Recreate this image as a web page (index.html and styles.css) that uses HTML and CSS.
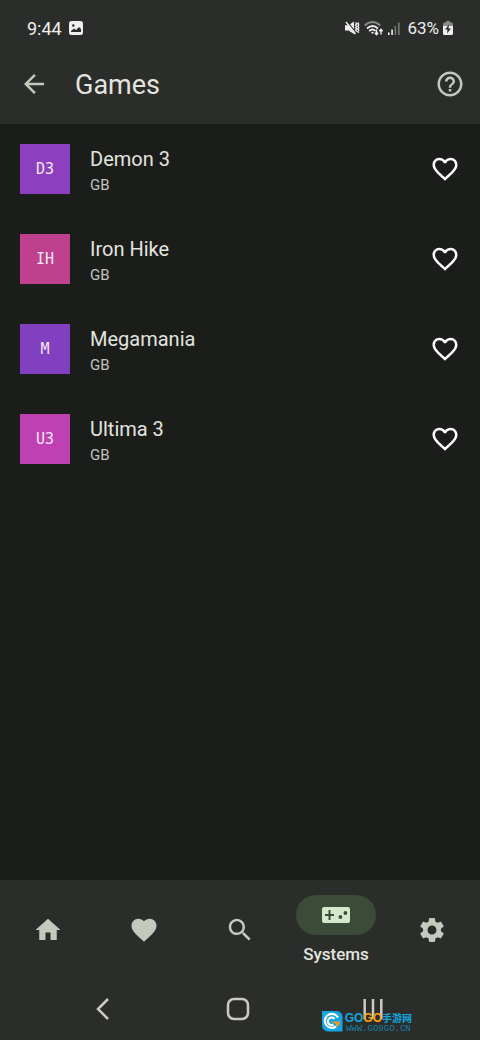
FILE: index.html
```html
<!DOCTYPE html>
<html lang="en">
<head>
<meta charset="utf-8">
<meta name="viewport" content="width=device-width, initial-scale=1">
<title>Games</title>
<link rel="stylesheet" href="styles.css">
</head>
<body>
<svg class="defs" aria-hidden="true">
  <symbol id="heart-outline" viewBox="0 0 24 24"><path d="M16.5 3c-1.74 0-3.41.81-4.5 2.09C10.91 3.81 9.24 3 7.5 3 4.42 3 2 5.42 2 8.5c0 3.78 3.4 6.86 8.55 11.54L12 21.35l1.45-1.32C18.6 15.36 22 12.28 22 8.5 22 5.42 19.58 3 16.5 3zm-4.4 15.55l-.1.1-.1-.1C7.14 14.24 4 11.39 4 8.5 4 6.5 5.5 5 7.5 5c1.54 0 3.04.99 3.57 2.36h1.87C13.46 5.99 14.96 5 16.5 5c2 0 3.5 1.5 3.5 3.5 0 2.89-3.14 5.74-7.9 10.05z"/></symbol>
</svg>
<div class="screen">
  <header class="top">
    <div class="status">
      <span class="status-side">
        <span>9:44</span>
        <svg class="picture" viewBox="0 0 14 14"><path fill-rule="evenodd" d="M2.5 0h9A2.5 2.5 0 0 1 14 2.5v9a2.5 2.5 0 0 1-2.500 2.500h-9A2.500 2.500 0 0 1 0 11.500v-9A2.500 2.500 0 0 1 2.500 0zM2 11h10V8L10 6 7 9 5 7.500 2 10zM3 4.500a1.300 1.300 0 1 0 2.600 0a1.300 1.300 0 1 0-2.600 0z"/></svg>
      </span>
      <span class="status-side signals">
        <svg width="15" height="14" viewBox="0 0 15 14"><path d="M0 4.300h3.500L9 .5v12.500l-5.500-3.500H0z"/><path d="M2 .5l9.500 12" stroke="#2b2d2b" stroke-width="1.300"/><path d="M1 1l9.500 12" stroke="#eee" stroke-width="1.500"/><path d="M10.500 1.500l1.300 1.300-1.300 1.300 1.300 1.300-1.300 1.300 1.300 1.300-1.300 1.300 1.300 1.300M13.800 1.500l-1 1.300 1 1.300-1 1.300 1 1.300-1 1.300 1 1.300-1 1.300 1 1.300" fill="none" stroke="#eee" stroke-width="1.300"/></svg>
        <svg width="20" height="15" viewBox="0 0 20 15"><g fill="none" stroke="#eee" stroke-width="1.700"><path d="M.7 4.500Q8.500-2.500 16.300 4.500" stroke="#888a88"/><path d="M3 7.500Q8.500 2.500 14 7.500M5.200 10Q8.500 7 11.500 10"/></g><path d="M7 11.300q1.500-1.200 3 0L8.500 13z"/><path d="M12.500 8.500v5M10.800 11.800l1.700 1.900 1.700-1.900M17 13.500v-5M15.300 10.200L17 8.300l1.700 1.900" fill="none" stroke="#eee" stroke-width="1.400"/></svg>
        <svg width="12" height="13" viewBox="0 0 12 13"><path d="M0 10.500h1.600V13H0zM3.300 7.500h1.600V13H3.300z"/><path fill="#777977" d="M6.600 4h1.600v9H6.600zM10 .5h1.600V13H10z"/></svg>
        <span class="percent">63%</span>
        <svg class="battery" viewBox="0 0 10 14"><path fill="#888a88" d="M3 0h4v1.500h1.500A1.500 1.500 0 0 1 10 3v3H0V3a1.500 1.500 0 0 1 1.500-1.500H3z"/><path d="M0 5h10v7.500A1.500 1.500 0 0 1 8.500 14h-7A1.500 1.500 0 0 1 0 12.500z"/><path fill="#2b2d2b" d="M6 3.500L2 8.500h2.500L4 12.500 8 7.500H5.500z"/></svg>
      </span>
    </div>
    <div class="appbar">
      <button class="icon-button" aria-label="Back"><svg class="icon-xl" viewBox="0 0 24 24"><path d="M20 11H7.830l5.590-5.590L12 4l-8 8 8 8 1.410-1.410L7.830 13H20z"/></svg></button>
      <h1>Games</h1>
      <button class="icon-button" aria-label="Help"><svg class="icon-xl" viewBox="0 0 24 24"><path d="M11 18h2v-2h-2v2zm1-16C6.480 2 2 6.480 2 12s4.480 10 10 10 10-4.480 10-10S17.520 2 12 2zm0 18c-4.410 0-8-3.590-8-8s3.590-8 8-8 8 3.590 8 8-3.590 8-8 8zm0-14c-2.210 0-4 1.790-4 4h2c0-1.100.9-2 2-2s2 .9 2 2c0 2-3 1.750-3 5h2c0-2.250 3-2.500 3-5 0-2.210-1.790-4-4-4z"/></svg></button>
    </div>
  </header>
  <main>
    <ul class="games">
      <li><span class="cover violet">D3</span><div class="info"><h2>Demon 3</h2><p>GB</p></div><button class="favorite" aria-label="Favorite Demon 3"><svg class="icon-xl"><use href="#heart-outline"/></svg></button></li>
      <li><span class="cover pink">IH</span><div class="info"><h2>Iron Hike</h2><p>GB</p></div><button class="favorite" aria-label="Favorite Iron Hike"><svg class="icon-xl"><use href="#heart-outline"/></svg></button></li>
      <li><span class="cover indigo">M</span><div class="info"><h2>Megamania</h2><p>GB</p></div><button class="favorite" aria-label="Favorite Megamania"><svg class="icon-xl"><use href="#heart-outline"/></svg></button></li>
      <li><span class="cover magenta">U3</span><div class="info"><h2>Ultima 3</h2><p>GB</p></div><button class="favorite" aria-label="Favorite Ultima 3"><svg class="icon-xl"><use href="#heart-outline"/></svg></button></li>
    </ul>
  </main>
  <footer class="bottom">
    <nav class="tabs" aria-label="Main">
      <button aria-label="Home"><svg class="icon-xl" viewBox="0 0 24 24"><path d="M10 20v-6h4v6h5v-8h3L12 3 2 12h3v8z"/></svg></button>
      <button aria-label="Favorites"><svg class="icon-xl" viewBox="0 0 24 24"><path d="M12 21.350l-1.450-1.320C5.400 15.360 2 12.280 2 8.500 2 5.420 4.420 3 7.500 3c1.740 0 3.410.81 4.500 2.090C13.090 3.810 14.760 3 16.500 3 19.580 3 22 5.420 22 8.500c0 3.780-3.400 6.860-8.550 11.540L12 21.350z"/></svg></button>
      <button aria-label="Search"><svg class="icon-xl" viewBox="0 0 24 24"><path d="M15.500 14h-.79l-.28-.27C15.410 12.590 16 11.110 16 9.500 16 5.910 13.090 3 9.500 3S3 5.910 3 9.500 5.910 16 9.500 16c1.610 0 3.090-.59 4.230-1.570l.27.28v.79l5 4.990L20.490 19l-4.990-5zm-6 0C7.010 14 5 11.990 5 9.500S7.010 5 9.500 5 14 7.010 14 9.500 11.990 14 9.500 14z"/></svg></button>
      <button class="active"><span class="pill"><svg width="28" height="16" viewBox="0 0 28 16"><path fill-rule="evenodd" d="M2 0h24a2 2 0 0 1 2 2v12a2 2 0 0 1-2 2H2a2 2 0 0 1-2-2V2a2 2 0 0 1 2-2zM6.500 3v4H3v2h3.500v4h2V9H12V7H8.500V3zM16.500 10a1.900 1.900 0 1 0 3.800 0a1.900 1.900 0 1 0-3.800 0zM21.500 6a1.900 1.900 0 1 0 3.800 0a1.900 1.900 0 1 0-3.800 0z"/></svg></span><span>Systems</span></button>
      <button aria-label="Settings"><svg class="icon-xl" viewBox="0 0 24 24"><path d="M19.140 12.940c.04-.3.060-.61.060-.94 0-.32-.02-.64-.07-.94l2.030-1.580c.18-.14.230-.41.120-.61l-1.920-3.320c-.12-.22-.37-.29-.59-.22l-2.390.96c-.5-.38-1.030-.7-1.620-.94l-.36-2.540c-.04-.24-.24-.41-.48-.41h-3.840c-.24 0-.43.17-.47.41l-.36 2.540c-.59.24-1.130.57-1.620.94l-2.390-.96c-.22-.08-.47 0-.59.22L2.740 8.870c-.12.21-.08.47.12.61l2.030 1.580c-.05.3-.09.63-.09.94s.02.64.07.94l-2.030 1.580c-.18.14-.23.41-.12.61l1.920 3.320c.12.22.37.29.59.22l2.390-.96c.5.38 1.030.7 1.620.94l.36 2.540c.05.24.24.41.48.41h3.840c.24 0 .44-.17.47-.41l.36-2.540c.59-.24 1.130-.56 1.620-.94l2.390.96c.22.08.47 0 .59-.22l1.920-3.320c.12-.22.070-.47-.12-.61l-2.010-1.580zM12 15.600c-1.980 0-3.600-1.620-3.600-3.600s1.620-3.600 3.600-3.600 3.600 1.620 3.600 3.600-1.620 3.600-3.600 3.600z"/></svg></button>
    </nav>
    <div class="system">
      <button aria-label="System back"><svg viewBox="0 0 24 24"><path d="M17 2L7 12l10 10"/></svg></button>
      <button aria-label="System home"><svg viewBox="0 0 24 24"><rect x="2" y="2" width="20" height="20" rx="6"/></svg></button>
      <button aria-label="Recent apps"><svg viewBox="0 0 24 24"><path d="M3.700 2v20M12 2v20M20.300 2v20"/></svg></button>
    </div>
    <div class="watermark">
      <svg width="22" height="21" viewBox="0 0 22 21"><path fill="#13a5df" d="M1 0h14a6 6 0 0 1 6.500 6v14.500H7a6 6 0 0 1-6-6z"/><path fill="none" stroke="#fff" stroke-width="2.200" d="M17 6.500a7 7 0 1 0-2 9M13.500 8a3.700 3.700 0 1 0-1 5.500"/><path fill="#f7981d" d="M10 10.500h9c0 3-2 5-4 5.500v-3z"/></svg>
      <div><div class="brand"><b>GO</b><b class="orange">GO</b><span>手游网</span></div><div class="url">WWW.GO9GO.CN</div></div>
    </div>
  </footer>
</div>
</body>
</html>
```

FILE: styles.css
```css
* { box-sizing: border-box; margin: 0; padding: 0; }
body { background: #1b1d1b; color: #e3e4df; font-family: Roboto, "Noto Sans", sans-serif; }
button { background: none; border: 0; color: inherit; font: inherit; cursor: pointer; }
svg { display: block; fill: currentColor; flex: none; }
.defs { position: absolute; width: 0; height: 0; }
.screen { display: flex; flex-direction: column; min-height: 100vh; }
.top, .bottom { background: #2b2d2b; }
.status { display: flex; justify-content: space-between; align-items: center; height: 44px; padding: 12px 27px 0; font-size: 18px; color: #eeeeee; }
.status-side { display: flex; align-items: center; gap: 7px; }
.signals { gap: 4px; }
.percent { margin-left: 3px; font-size: 17px; }
.picture { width: 14px; height: 14px; }
.battery { width: 10px; height: 14px; }
.appbar { display: flex; align-items: center; height: 80px; padding: 0 10px 0 14px; }
.icon-button { display: grid; place-items: center; width: 40px; height: 40px; color: #c3c9bd; }
.icon-xl { width: 30px; height: 30px; }
h1 { flex: 1; padding: 2px 0 0 21px; font-size: 27px; font-weight: 400; line-height: 36px; }
main { flex: 1; }
.games { list-style: none; }
.games li { display: flex; align-items: center; height: 90px; padding: 0 15px 0 20px; }
.cover { display: grid; place-items: center; width: 50px; height: 50px; color: #f6e9f8; font: 15px/20px "DejaVu Sans Mono", monospace; }
.violet { background: #8c40bf; }
.pink { background: #bf408c; }
.indigo { background: #8040bf; }
.magenta { background: #bf40b3; }
.info { flex: 1; padding: 4px 0 0 20px; }
h2 { font-size: 20px; font-weight: 400; line-height: 28px; }
.info p { color: #c1c3be; font-size: 15px; line-height: 24px; }
.favorite { display: grid; place-items: center; width: 40px; height: 40px; color: #ffffff; }
.bottom { position: relative; }
.tabs { display: grid; grid-template-columns: repeat(5, 1fr); height: 100px; color: #c3c9bd; }
.tabs button { display: flex; flex-direction: column; align-items: center; justify-content: center; }
.tabs .active { gap: 8px; color: #e3e4df; font-size: 17px; font-weight: 500; line-height: 22px; }
.pill { display: grid; place-items: center; width: 80px; height: 40px; border-radius: 20px; background: #3b4b38; color: #d3e8cd; }
.system { display: grid; grid-template-columns: repeat(3, 1fr); height: 60px; padding: 0 40px 2px 36px; color: #c9cac8; }
.system button { display: grid; place-items: center; }
.system svg { width: 24px; height: 24px; fill: none; stroke: currentColor; stroke-width: 2.500; }
.watermark { position: absolute; right: 68px; bottom: 8px; display: flex; align-items: center; gap: 2px; color: #13a5df; }
.brand { display: flex; align-items: center; font: 700 12px/16px "Liberation Sans", sans-serif; }
.brand .orange { color: #fca311; }
.brand span { font: 700 10px/16px "Noto Sans CJK SC", sans-serif; }
.url { font: 9px/6px "Liberation Mono", monospace; text-align: center; color: #147da6; }
```
